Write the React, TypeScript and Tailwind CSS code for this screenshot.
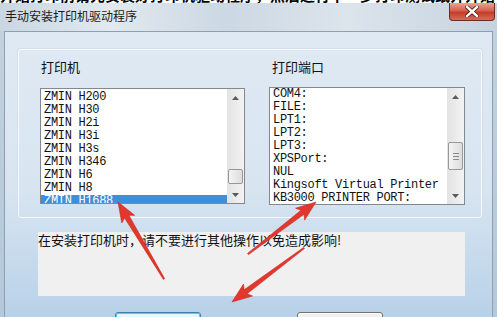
import React from 'react'

const PRINTERS = ['ZMIN H200', 'ZMIN H30', 'ZMIN H2i', 'ZMIN H3i', 'ZMIN H3s', 'ZMIN H346', 'ZMIN H6', 'ZMIN H8', 'ZMIN H1688']
const PORTS = ['COM4:', 'FILE:', 'LPT1:', 'LPT2:', 'LPT3:', 'XPSPort:', 'NUL', 'Kingsoft Virtual Printer', 'KB3000 PRINTER PORT:']

// red annotation arrows: tail -> tip
const ARROWS: Array<[number, number, number, number]> = [
  [164, 279, 118, 202],
  [248, 254, 316, 202],
  [304, 248, 232, 302],
]

function arrowPoints(x1: number, y1: number, x2: number, y2: number) {
  const dx = x2 - x1
  const dy = y2 - y1
  const len = Math.hypot(dx, dy)
  const ux = dx / len
  const uy = dy / len
  const nx = -uy
  const ny = ux
  const headL = 17
  const headW = 15
  const shaft = 5
  const tail = 1.5
  const bx = x2 - ux * headL
  const by = y2 - uy * headL
  const nb = 3 // notch
  const pts = [
    [x1 + (nx * tail) / 2, y1 + (ny * tail) / 2],
    [bx + (nx * shaft) / 2, by + (ny * shaft) / 2],
    [bx - ux * nb + (nx * headW) / 2, by - uy * nb + (ny * headW) / 2],
    [x2, y2],
    [bx - ux * nb - (nx * headW) / 2, by - uy * nb - (ny * headW) / 2],
    [bx - (nx * shaft) / 2, by - (ny * shaft) / 2],
    [x1 - (nx * tail) / 2, y1 - (ny * tail) / 2],
  ]
  return pts.map(p => `${p[0].toFixed(1)},${p[1].toFixed(1)}`).join(' ')
}

function ScrollArrow({ up }: { up?: boolean }) {
  return (
    <div className="h-[17px] shrink-0 flex items-center justify-center">
      <svg width="7" height="4" viewBox="0 0 7 4">
        <path d={up ? 'M0 4 L3.5 0 L7 4Z' : 'M0 0 L7 0 L3.5 4Z'} fill="#5a5a5a" />
      </svg>
    </div>
  )
}

function ScrollBar({ thumb, grip }: { thumb: string; grip?: boolean }) {
  return (
    <div className="w-[17px] shrink-0 flex flex-col bg-[linear-gradient(90deg,#e3e3e3,#f3f3f3)]">
      <ScrollArrow up />
      <div className="flex-1 min-h-0 px-px">
        <div
          className={`${thumb} rounded-[2px] border border-[#979797] bg-[linear-gradient(90deg,#f4f4f4,#dddddd)] flex flex-col items-center justify-center gap-[2px]`}
        >
          {grip && [0, 1, 2].map(i => <div key={i} className="w-[6px] h-px bg-[#8a8a8a]" />)}
        </div>
      </div>
      <ScrollArrow />
    </div>
  )
}

function ListBox({ items, selected, width, height, top, thumb, grip }: {
  items: string[]
  selected?: number
  width: string
  height: string
  top: string
  thumb: string
  grip?: boolean
}) {
  return (
    <div className={`${width} ${height} shrink-0 border border-[#828790] bg-white flex overflow-hidden`}>
      <div className={`flex-1 min-w-0 overflow-hidden ${top}`}>
        {items.map((it, i) => (
          <div
            key={it}
            className={`h-[13px] leading-[13px] pl-[3px] whitespace-nowrap font-['Liberation_Mono',monospace] text-[12px] tracking-[-0.3px] ${
              i === selected ? 'bg-[#3d8fdb] text-white' : 'text-[#111]'
            }`}
          >
            {it}
          </div>
        ))}
      </div>
      <ScrollBar thumb={thumb} grip={grip} />
    </div>
  )
}

export default function App() {
  return (
    <div className="relative w-[497px] h-[317px] overflow-hidden flex flex-col bg-[linear-gradient(180deg,#c3d2de,#b3c8da)] font-['Noto_Sans_CJK_SC',sans-serif]">
      {/* page behind the dialog */}
      <div className="h-[3px] shrink-0 overflow-hidden bg-white">
        <div className="-mt-[13px] whitespace-nowrap text-[15px] leading-[15px] text-black font-bold">
          开始打印前请先安装好打印机驱动程序，然后进行下一步打印测试纸并开始
        </div>
      </div>

      {/* title bar */}
      <div className="h-[28px] shrink-0 flex bg-[linear-gradient(90deg,#c9d6e1,#e2e9ef_22%,#ccd8e3_45%,#dce4ec_70%,#c6d3df)]">
        <div className="pl-[5px] self-center -mt-[2px] text-[12px] leading-none text-[#1b1b1b]">手动安装打印机驱动程序</div>
        <div className="ml-auto mr-[2px] w-[46px] h-[18px] rounded-b-[4px] border border-t-0 border-[#6b2a22] bg-[linear-gradient(180deg,#eba494,#d8604d_45%,#c23d2b_55%,#d86a55)] flex items-center justify-center">
          <svg width="14" height="11" viewBox="0 0 14 11">
            <path d="M2 1 L12 10 M12 1 L2 10" stroke="#4a1a14" strokeWidth="4" strokeLinecap="square" />
            <path d="M2 1 L12 10 M12 1 L2 10" stroke="#ffffff" strokeWidth="2.4" strokeLinecap="square" />
          </svg>
        </div>
      </div>

      {/* client area */}
      <div className="flex-1 min-h-0 overflow-hidden mx-[4px] border border-b-0 border-[#8e9fb1] bg-[linear-gradient(180deg,#dfe9f3_0%,#d8e5f1_55%,#b8d1e8_100%)] flex flex-col">
        {/* group box */}
        <div className="shrink-0 mt-[17px] ml-[13px] w-[464px] h-[169px] rounded-[3px] border border-[#f6f9fc] shadow-[0_0_0_1px_#d3dfe9] flex gap-[24px] pl-[21px] pt-[10px]">
          <div className="flex flex-col">
            <div className="h-[28px] shrink-0 pl-px text-[13px] leading-[13px] text-[#111]">打印机</div>
            <ListBox items={PRINTERS} selected={8} width="w-[205px]" height="h-[116px]" top="pt-[2px]" thumb="mt-[63px] h-[15px]" />
          </div>
          <div className="flex flex-col">
            <div className="h-[27px] shrink-0 pl-[3px] text-[13px] leading-[13px] text-[#111]">打印端口</div>
            <ListBox items={PORTS} width="w-[196px]" height="h-[118px]" top="pt-0" thumb="mt-[37px] h-[28px]" grip />
          </div>
        </div>

        {/* message */}
        <div className="shrink-0 mt-[14px] ml-[33px] w-[427px] h-[64px] bg-[#f0f0f0] text-[13px] leading-[16px] text-[#111] whitespace-nowrap">
          在安装打印机时，请不要进行其他操作以免造成影响!
        </div>

        {/* buttons */}
        <div className="shrink-0 mt-[16px] flex">
          <div className="ml-[110px] w-[86px] h-[23px] rounded-[3px] border border-[#3c7fb1] shadow-[inset_0_0_0_1px_#48d1f5] bg-[linear-gradient(180deg,#eaf6fd,#d9f0fc)]" />
          <div className="ml-[96px] w-[86px] h-[23px] rounded-[3px] border border-[#707070] shadow-[inset_0_0_0_1px_#fcfcfc] bg-[linear-gradient(180deg,#f2f2f2,#e3e3e3)]" />
        </div>
      </div>

      {/* annotation arrows */}
      <svg className="absolute inset-0 pointer-events-none" width="497" height="317" viewBox="0 0 497 317">
        {ARROWS.map((a, i) => (
          <polygon key={i} points={arrowPoints(...a)} fill="#e2372c" stroke="#c72a20" strokeWidth="0.6" strokeLinejoin="round" />
        ))}
      </svg>
    </div>
  )
}
